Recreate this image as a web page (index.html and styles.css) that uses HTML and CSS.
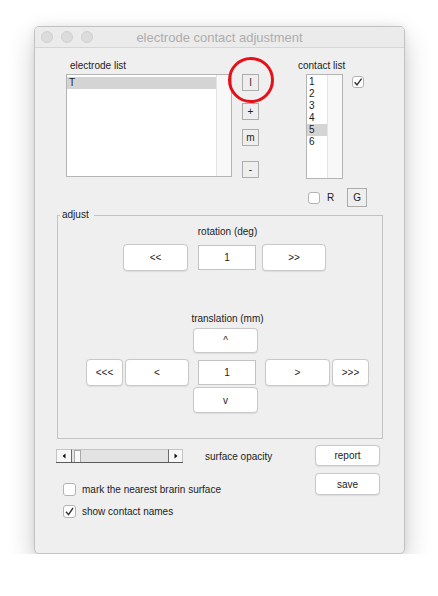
FILE: index.html
```html
<!DOCTYPE html>
<html>
<head>
<meta charset="utf-8">
<link rel="stylesheet" href="styles.css">
</head>
<body>
<div class="window">
  <div class="titlebar">
    <div class="lights"><span></span><span></span><span></span></div>
    <div class="title">electrode contact adjustment</div>
  </div>
  <div class="content">
    <div class="top">
      <div class="elec-col">
        <div class="label">electrode list</div>
        <div class="listbox elec-list">
          <div class="items"><div class="item sel">T</div></div>
          <div class="scroll"></div>
        </div>
      </div>
      <div class="btn-col">
        <button class="sq">l</button>
        <button class="sq b2">+</button>
        <button class="sq b3">m</button>
        <button class="sq b4">-</button>
      </div>
      <div class="contact-col">
        <div class="label">contact list</div>
        <div class="contact-row">
          <div class="listbox contact-list">
            <div class="items">
              <div class="item">1</div>
              <div class="item">2</div>
              <div class="item">3</div>
              <div class="item">4</div>
              <div class="item sel">5</div>
              <div class="item">6</div>
            </div>
            <div class="scroll"></div>
          </div>
          <span class="check small checked"><svg viewBox="0 0 12 12" width="12" height="12"><path d="M2.6 6.2 L5 8.8 L9.6 2.6" fill="none" stroke="#333" stroke-width="1.4"/></svg></span>
        </div>
        <div class="rg-row">
          <span class="check small"></span>
          <span class="r-text">R</span>
          <button class="sq g">G</button>
        </div>
      </div>
    </div>

    <div class="panel">
      <div class="panel-label">adjust</div>
      <div class="panel-inner">
        <div class="caption rot-cap">rotation (deg)</div>
        <div class="rot-row">
          <button class="btn w65">&lt;&lt;</button>
          <div class="field">1</div>
          <button class="btn w64 gap6">&gt;&gt;</button>
        </div>
        <div class="caption trans-cap">translation (mm)</div>
        <button class="btn up">^</button>
        <div class="mid-row">
          <button class="btn w37">&lt;&lt;&lt;</button>
          <button class="btn w64 gap2">&lt;</button>
          <div class="field gap9">1</div>
          <button class="btn w65 gap9">&gt;</button>
          <button class="btn w37 gap2">&gt;&gt;&gt;</button>
        </div>
        <button class="btn down">v</button>
      </div>
    </div>

    <div class="bottom">
      <div class="bottom-left">
        <div class="slider-row">
          <div class="slider">
            <div class="sarrow left"><svg viewBox="0 0 6 6" width="6" height="6"><path d="M4.5 0.5 L1.5 3 L4.5 5.5 Z" fill="#111"/></svg></div>
            <div class="strack"><div class="sthumb"></div></div>
            <div class="sarrow right"><svg viewBox="0 0 6 6" width="6" height="6"><path d="M1.5 0.5 L4.5 3 L1.5 5.5 Z" fill="#111"/></svg></div>
          </div>
          <span class="slider-label">surface opacity</span>
        </div>
        <div class="check-row first">
          <span class="check"></span>
          <span class="check-text">mark the nearest brarin surface</span>
        </div>
        <div class="check-row second">
          <span class="check checked"><svg viewBox="0 0 13 13" width="13" height="13"><path d="M3 6.8 L5.5 9.6 L10 3" fill="none" stroke="#333" stroke-width="1.4"/></svg></span>
          <span class="check-text">show contact names</span>
        </div>
      </div>
      <div class="bottom-right">
        <button class="btn report">report</button>
        <button class="btn save">save</button>
      </div>
    </div>
  </div>
  <div class="highlight"></div>
</div>
</body>
</html>
```

FILE: styles.css
```css
html, body {
  margin: 0;
  background: #ffffff;
}

body {
  font-family: "Liberation Sans", Arial, sans-serif;
  font-size: 10px;
  color: #1c1c1c;
}

.window {
  position: relative;
  margin: 26px 0 0 34px;
  width: 371px;
  height: 528px;
  box-sizing: border-box;
  border: 1px solid #c2c2c2;
  border-radius: 5px;
  background: #efefef;
  box-shadow: 0 12px 28px rgba(0, 0, 0, 0.2), 0 0 8px rgba(0, 0, 0, 0.07);
}

.titlebar {
  height: 20px;
  display: grid;
  align-items: center;
  background: #ebebeb;
  border-bottom: 1px solid #d6d6d6;
  border-radius: 4px 4px 0 0;
}

.lights,
.title {
  grid-area: 1 / 1;
}

.lights {
  display: flex;
  gap: 8px;
  padding-left: 6px;
}

.lights span {
  width: 12px;
  height: 12px;
  box-sizing: border-box;
  border-radius: 50%;
  background: #dcdcdc;
  border: 0.5px solid #d0d0d0;
}

.title {
  text-align: center;
  font-size: 13px;
  color: #adadad;
}

/* top area */
.top {
  display: flex;
  height: 167px;
  box-sizing: border-box;
  padding-top: 12px;
}

.label {
  height: 12px;
  line-height: 12px;
  margin-bottom: 2px;
  white-space: nowrap;
}

.elec-col {
  margin-left: 31px;
  width: 166px;
}

.elec-col .label {
  margin-left: 4px;
}

.listbox {
  display: flex;
  box-sizing: border-box;
  background: #ffffff;
  border: 1px solid #b4b4b4;
}

.items {
  flex: 1;
}

.item {
  height: 12px;
  line-height: 12px;
  padding-left: 2px;
}

.item.sel {
  background: #d4d4d4;
}

.scroll {
  width: 14px;
  background: #f8f8f8;
  border-left: 1px solid #e4e4e4;
}

.elec-list {
  width: 166px;
  height: 103px;
}

.elec-list .items {
  padding-top: 2px;
}

.btn-col {
  margin-left: 10px;
  display: flex;
  flex-direction: column;
  padding-top: 14px;
}

button {
  font-family: "Liberation Sans", Arial, sans-serif;
  font-size: 10px;
  color: #1c1c1c;
  padding: 0;
  margin: 0;
}

.sq {
  width: 17px;
  height: 17px;
  box-sizing: border-box;
  background: #eeeeee;
  border: 1px solid #acacac;
  border-radius: 0;
  line-height: 14px;
}

.b2 { margin-top: 12px; }
.b3 { margin-top: 9px; }
.b4 { margin-top: 15px; }

.contact-col {
  margin-left: 39px;
}

.contact-row {
  display: flex;
  align-items: flex-start;
  margin-left: 8px;
}

.contact-list {
  width: 37px;
  height: 105px;
}

.contact-list .items {
  padding-top: 1px;
}

.check {
  display: block;
  width: 13px;
  height: 13px;
  box-sizing: border-box;
  background: #ffffff;
  border: 1px solid #b3b3b3;
  border-radius: 3px;
  flex-shrink: 0;
}

.check svg {
  display: block;
  margin: -1px 0 0 -1px;
}

.check.small {
  width: 12px;
  height: 12px;
}

.contact-row .check {
  margin-left: 9px;
  margin-top: 2px;
}

.rg-row {
  display: flex;
  align-items: center;
  height: 19px;
  margin-top: 9px;
}

.rg-row .check {
  margin-left: 10px;
}

.r-text {
  margin-left: 7px;
}

.sq.g {
  width: 20px;
  height: 19px;
  margin-left: 13px;
}

/* adjust panel */
.panel {
  position: relative;
  margin-left: 22px;
  width: 326px;
  height: 224px;
  box-sizing: border-box;
  border: 1px solid #c3c3c3;
}

.panel-label {
  position: absolute;
  top: -7px;
  left: 2px;
  padding: 0 5px 0 2px;
  line-height: 12px;
  background: #efefef;
}

.panel-inner {
  margin-left: 28px;
  width: 283px;
}

.caption {
  height: 12px;
  line-height: 12px;
  text-align: center;
}

.rot-cap {
  margin-top: 10px;
}

.btn {
  box-sizing: border-box;
  background: #ffffff;
  border: 1px solid #c9c9c9;
  border-radius: 4px;
  box-shadow: 0 0.5px 1px rgba(0, 0, 0, 0.08);
  height: 27px;
}

.field {
  box-sizing: border-box;
  width: 58px;
  height: 25px;
  line-height: 23px;
  text-align: center;
  background: #ffffff;
  border: 1px solid #c2c2c2;
}

.rot-row {
  display: flex;
  align-items: center;
  margin-top: 6px;
  margin-left: 37px;
}

.rot-row .field {
  margin-left: 10px;
}

.w65 { width: 65px; }
.w64 { width: 64px; }
.w37 { width: 37px; }
.gap2 { margin-left: 2px; }
.gap6 { margin-left: 6px; }
.gap9 { margin-left: 9px; }

.trans-cap {
  margin-top: 42px;
}

.btn.up {
  display: block;
  margin-top: 3px;
  margin-left: 107px;
  width: 65px;
  height: 25px;
}

.mid-row {
  display: flex;
  align-items: center;
  margin-top: 6px;
}

.btn.down {
  display: block;
  margin-top: 1px;
  margin-left: 107px;
  width: 65px;
  height: 26px;
}

/* bottom */
.bottom {
  display: flex;
  margin-top: 6px;
}

.bottom-left {
  margin-left: 21px;
}

.slider-row {
  display: flex;
  align-items: center;
  margin-top: 4px;
  height: 14px;
}

.slider {
  display: flex;
  width: 127px;
  height: 14px;
  box-sizing: border-box;
  border-bottom: 1px solid #5a5a5a;
}

.sarrow {
  width: 16px;
  box-sizing: border-box;
  background: #f7f7f7;
  border: 1px solid #c4c4c4;
  border-bottom: none;
  display: flex;
  align-items: center;
  justify-content: center;
}

.sarrow.left {
  border-right: 1px solid #6a6a6a;
}

.sarrow.right {
  width: 15px;
  border-left: 1px solid #6a6a6a;
}

.strack {
  flex: 1;
  display: flex;
  background: #e3e3e3;
  border-top: 1px solid #c4c4c4;
}

.sthumb {
  margin-left: 2px;
  width: 7px;
  box-sizing: border-box;
  background: #f9f9f9;
  border: 1px solid #a8a8a8;
  border-bottom: none;
}

.slider-label {
  margin-left: 22px;
}

.check-row {
  display: flex;
  align-items: center;
  height: 13px;
  margin-left: 7px;
}

.check-row.first {
  margin-top: 20px;
}

.check-row.second {
  margin-top: 9px;
}

.check-text {
  margin-left: 6px;
}

.bottom-right {
  margin-left: auto;
  margin-right: 24px;
  display: flex;
  flex-direction: column;
}

.btn.report {
  width: 65px;
  height: 21px;
}

.btn.save {
  width: 65px;
  height: 22px;
  margin-top: 7px;
}

.highlight {
  position: absolute;
  left: 193px;
  top: 30px;
  width: 46px;
  height: 46px;
  box-sizing: border-box;
  border: 3.5px solid #e6101a;
  border-radius: 50%;
}
```
